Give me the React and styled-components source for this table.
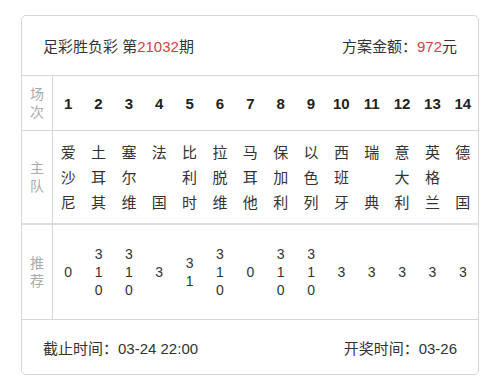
import styled, { createGlobalStyle } from "styled-components";

const GlobalStyle = createGlobalStyle`
  body {
    margin: 0;
    background: #fff;
    font-family: "Liberation Sans", "Noto Sans CJK SC", sans-serif;
    color: #333;
  }
`;

const Card = styled.div`
  margin: 15px 0 0 21px;
  width: 456px;
  border: 1px solid #d5d7db;
  border-radius: 5px;
`;

const Bar = styled.div`
  height: ${(p) => p.h}px;
  display: flex;
  justify-content: space-between;
  align-items: center;
  padding: 0 21px;
  font-size: 15px;
  color: #333;
  border-top: ${(p) => (p.top ? "1px solid #d5d7db" : "none")};
`;

const Red = styled.span`
  color: #d2433b;
`;

const Row = styled.div`
  display: grid;
  grid-template-columns: 31px repeat(14, 1fr);
  height: ${(p) => p.h}px;
  border-top: ${(p) => p.border || "1px solid #d5d7db"};
`;

const Label = styled.div`
  border-right: 1px solid #d5d7db;
  display: flex;
  flex-direction: column;
  align-items: center;
  justify-content: center;
  font-size: 14px;
  line-height: 18px;
  color: #aaa;
`;

const Cell = styled.div`
  display: flex;
  align-items: center;
  justify-content: center;
`;

const Num = styled.span`
  font-size: 15px;
  font-weight: bold;
  color: #222;
`;

const Team = styled.div`
  height: 75px;
  display: flex;
  flex-direction: column;
  justify-content: space-between;
  align-items: center;
  font-size: 15px;
  line-height: 25px;
  color: #333;
`;

const Pick = styled.div`
  display: flex;
  flex-direction: column;
  align-items: center;
  font-size: 14px;
  line-height: 18px;
  color: #333;
`;

const teams = ["爱沙尼", "土耳其", "塞尔维", "法国", "比利时", "拉脱维", "马耳他", "保加利", "以色列", "西班牙", "瑞典", "意大利", "英格兰", "德国"];
const picks = ["0", "310", "310", "3", "31", "310", "0", "310", "310", "3", "3", "3", "3", "3"];

export default function App() {
  return (
    <>
      <GlobalStyle />
      <Card>
        <Bar h={59}>
          <span>
            足彩胜负彩 第<Red>21032</Red>期
          </span>
          <span>
            方案金额：<Red>972</Red>元
          </span>
        </Bar>
        <Row h={54}>
          <Label>
            <span>场</span>
            <span>次</span>
          </Label>
          {teams.map((_, i) => (
            <Cell key={i}>
              <Num>{i + 1}</Num>
            </Cell>
          ))}
        </Row>
        <Row h={92}>
          <Label>
            <span>主</span>
            <span>队</span>
          </Label>
          {teams.map((t, i) => (
            <Cell key={i}>
              <Team>
                {t.split("").map((c, j) => (
                  <span key={j}>{c}</span>
                ))}
              </Team>
            </Cell>
          ))}
        </Row>
        <Row h={94} border="2px solid #dcdee1">
          <Label>
            <span>推</span>
            <span>荐</span>
          </Label>
          {picks.map((p, i) => (
            <Cell key={i}>
              <Pick>
                {p.split("").map((c, j) => (
                  <span key={j}>{c}</span>
                ))}
              </Pick>
            </Cell>
          ))}
        </Row>
        <Bar h={54} top>
          <span>截止时间：03-24 22:00</span>
          <span>开奖时间：03-26</span>
        </Bar>
      </Card>
    </>
  );
}
